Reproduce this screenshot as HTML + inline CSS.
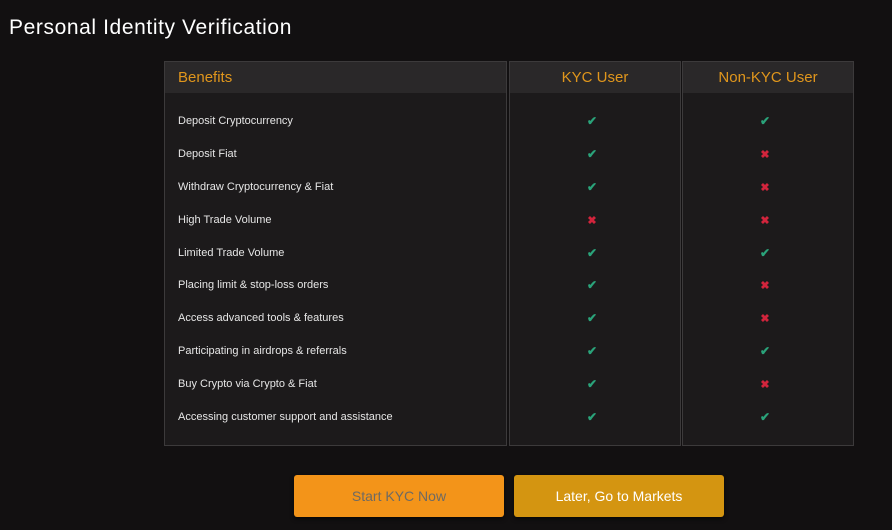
<!DOCTYPE html>
<html><head><style>
body{margin:0;width:892px;height:530px;background:#121011;font-family:"Liberation Sans",sans-serif;position:relative;overflow:hidden}
h1{position:absolute;left:9px;top:16px;margin:0;font-weight:normal;font-size:21px;color:#fff;letter-spacing:.6px}
.col{position:absolute;top:61px;height:385px;background:#1c1a1b;border:1px solid #3c3a3b;box-sizing:border-box}
.hd{height:31px;background:#2a2829;color:#e0961c;font-size:15px;line-height:31px}
.row{position:absolute;font-size:11px;color:#e6e6e6;left:13px}
.ic{position:absolute;font-size:12px;width:100%;text-align:center;font-weight:bold;margin-left:-3px}
.ok{color:#2aa37a}.no{color:#d2243c;font-size:11px}
.btn{position:absolute;top:475px;height:42px;width:210px;border-radius:3px;text-align:center;line-height:42px;font-size:14px;box-shadow:0 2px 4px rgba(0,0,0,.6)}
</style></head><body>
<h1>Personal Identity Verification</h1>
<div class="col" style="left:164px;width:343px"><div class="hd" style="padding-left:13px">Benefits</div>
<div class="row" style="top:53px">Deposit Cryptocurrency</div>
<div class="row" style="top:86px">Deposit Fiat</div>
<div class="row" style="top:119px">Withdraw Cryptocurrency &amp; Fiat</div>
<div class="row" style="top:152px">High Trade Volume</div>
<div class="row" style="top:185px">Limited Trade Volume</div>
<div class="row" style="top:217px">Placing limit &amp; stop-loss orders</div>
<div class="row" style="top:250px">Access advanced tools &amp; features</div>
<div class="row" style="top:283px">Participating in airdrops &amp; referrals</div>
<div class="row" style="top:316px">Buy Crypto via Crypto &amp; Fiat</div>
<div class="row" style="top:349px">Accessing customer support and assistance</div>
</div>
<div class="col" style="left:509px;width:172px"><div class="hd" style="text-align:center">KYC User</div>
<div class="ic ok" style="top:52px">✔</div><div class="ic ok" style="top:85px">✔</div><div class="ic ok" style="top:118px">✔</div><div class="ic no" style="top:152px">✖</div><div class="ic ok" style="top:184px">✔</div><div class="ic ok" style="top:216px">✔</div><div class="ic ok" style="top:249px">✔</div><div class="ic ok" style="top:282px">✔</div><div class="ic ok" style="top:315px">✔</div><div class="ic ok" style="top:348px">✔</div>
</div>
<div class="col" style="left:682px;width:172px"><div class="hd" style="text-align:center">Non-KYC User</div>
<div class="ic ok" style="top:52px">✔</div><div class="ic no" style="top:86px">✖</div><div class="ic no" style="top:119px">✖</div><div class="ic no" style="top:152px">✖</div><div class="ic ok" style="top:184px">✔</div><div class="ic no" style="top:217px">✖</div><div class="ic no" style="top:250px">✖</div><div class="ic ok" style="top:282px">✔</div><div class="ic no" style="top:316px">✖</div><div class="ic ok" style="top:348px">✔</div>
</div>
<div class="btn" style="left:294px;background:#f39419;color:#6e6a63">Start KYC Now</div>
<div class="btn" style="left:514px;background:#d49511;color:#fff">Later, Go to Markets</div>
</body></html>
